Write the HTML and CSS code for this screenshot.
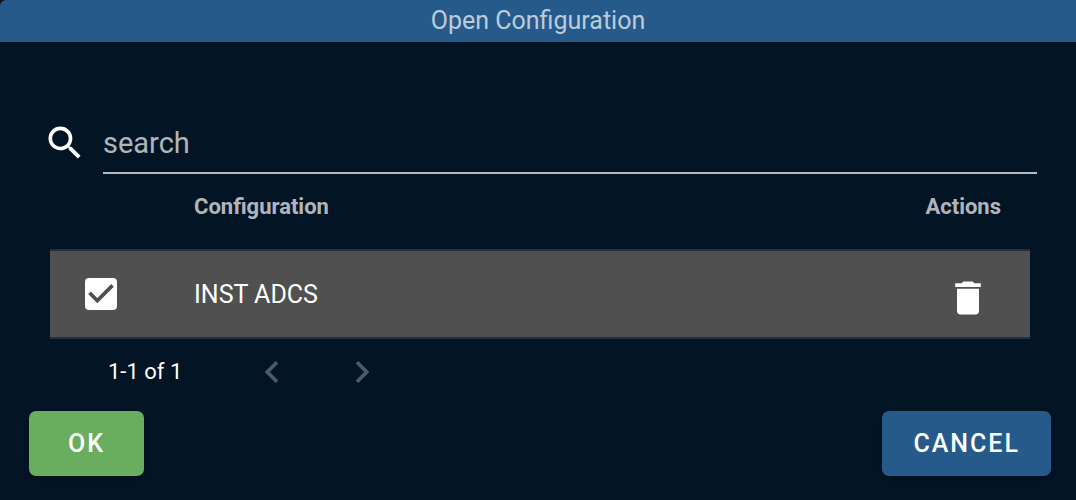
FILE: index.html
```html
<!DOCTYPE html>
<html lang="en">
<head>
<meta charset="utf-8">
<meta name="viewport" content="width=device-width, initial-scale=1">
<title>Open Configuration</title>
<link rel="stylesheet" href="styles.css">
</head>
<body>
<main class="dialog">
  <header class="dialog-bar"><h1 class="dialog-title">Open Configuration</h1></header>
  <div class="content">
    <div class="search">
      <svg class="icon" viewBox="0 0 24 24" aria-hidden="true"><path d="M9.5,3A6.5,6.5 0 0,1 16,9.5C16,11.11 15.41,12.59 14.44,13.73L14.71,14H15.5L20.5,19L19,20.5L14,15.5V14.71L13.73,14.44C12.59,15.41 11.11,16 9.5,16A6.5,6.5 0 0,1 3,9.5A6.5,6.5 0 0,1 9.5,3M9.5,5C7,5 5,7 5,9.5C5,12 7,14 9.5,14C12,14 14,12 14,9.5C14,7 12,5 9.5,5Z"/></svg>
      <input class="search-input" type="text" placeholder="search" aria-label="search">
    </div>
    <table class="table">
      <thead>
        <tr><th class="col-select"></th><th class="col-name" scope="col">Configuration</th><th class="col-actions" scope="col">Actions</th></tr>
      </thead>
      <tbody>
        <tr>
          <td class="col-select">
            <label class="check">
              <input class="check-input" type="checkbox" checked aria-label="Select INST ADCS">
              <svg class="icon check-mark" viewBox="0 0 24 24" aria-hidden="true"><path d="M10,17L5,12L6.41,10.58L10,14.17L17.59,6.58L19,8L10,17Z"/></svg>
            </label>
          </td>
          <td class="col-name">INST ADCS</td>
          <td class="col-actions">
            <button class="icon-button delete" type="button" aria-label="Delete"><svg class="icon" viewBox="0 0 24 24" aria-hidden="true"><path d="M19,4H15.5L14.5,3H9.5L8.5,4H5V6H19M6,19A2,2 0 0,0 8,21H16A2,2 0 0,0 18,19V7H6V19Z"/></svg></button>
          </td>
        </tr>
      </tbody>
    </table>
    <nav class="pager" aria-label="Pages">
      <span class="pager-range">1-1 of 1</span>
      <button class="icon-button" type="button" disabled aria-label="Previous page"><svg class="icon" viewBox="0 0 24 24" aria-hidden="true"><path d="M15.41,16.58L10.83,12L15.41,7.41L14,6L8,12L14,18L15.41,16.58Z"/></svg></button>
      <button class="icon-button" type="button" disabled aria-label="Next page"><svg class="icon" viewBox="0 0 24 24" aria-hidden="true"><path d="M8.59,16.58L13.17,12L8.59,7.41L10,6L16,12L10,18L8.59,16.58Z"/></svg></button>
    </nav>
  </div>
  <footer class="actions">
    <button class="button button-ok" type="button">OK</button>
    <button class="button button-cancel" type="button">CANCEL</button>
  </footer>
</main>
</body>
</html>
```
FILE: styles.css
```css
* { box-sizing: border-box; }

body {
  margin: 0;
  background: #121417;
  color: #fff;
  font-family: Roboto, "Liberation Sans", sans-serif;
}

.dialog {
  min-height: 100vh;
  overflow: hidden;
  border-top-left-radius: 6px;
  background: #031425;
}

.dialog-bar { background: #255a8b; text-align: center; }

.dialog-title {
  margin: 0;
  color: rgba(255, 255, 255, 0.7);
  font-size: 25px;
  font-weight: 400;
  line-height: 42px;
}

.content { padding: 72px 39px 0 43px; }

.icon {
  display: block;
  width: 44px;
  height: 44px;
  fill: currentColor;
}

.search { display: flex; align-items: flex-start; gap: 16px; padding-top: 7px; }

.search .icon { flex: none; }

.search-input {
  flex: 1;
  min-width: 0;
  height: 53px;
  padding: 0 0 8px;
  border: 0;
  border-bottom: 2px solid #b3b9be;
  border-radius: 0;
  outline: 0;
  background: transparent;
  color: #fff;
  font: 400 29px/44px Roboto, "Liberation Sans", sans-serif;
}

.search-input::placeholder { color: rgba(255, 255, 255, 0.7); opacity: 1; }

.table {
  width: calc(100% - 14px);
  margin: 0 7px;
  border-collapse: separate;
  border-spacing: 0;
  table-layout: fixed;
  text-align: left;
}

.table th {
  height: 75px;
  padding: 0 29px 11px;
  color: rgba(255, 255, 255, 0.7);
  font-size: 22px;
  font-weight: 700;
}

.table td {
  height: 90px;
  padding: 0 29px;
  border: solid #233041;
  border-width: 2px 0;
  background: #505050;
  font-size: 25px;
}

.table .col-select { width: 115px; padding-right: 0; }
.table .col-actions { width: 240px; text-align: right; }

.check { display: grid; width: 44px; height: 44px; place-items: center; }

.check-input,
.check-mark { grid-area: 1 / 1; }

.check-input {
  width: 32px;
  height: 32px;
  margin: 0;
  appearance: none;
  border: 3px solid #fff;
  border-radius: 4px;
}

.check-input:checked { background: #fff; }
.check-mark { visibility: hidden; color: #505050; pointer-events: none; }
.check-input:checked + .check-mark { visibility: visible; }

.icon-button {
  display: inline-block;
  padding: 0;
  border: 0;
  background: transparent;
  color: #fff;
  vertical-align: middle;
}

.icon-button:disabled { color: rgba(255, 255, 255, 0.3); }

.delete { margin: 8px 11px 0 0; }

.pager { display: flex; align-items: center; gap: 46px; padding: 11px 65px 0; }

.pager-range { margin-right: 22px; font-size: 22px; line-height: 40px; }

.actions { display: flex; justify-content: space-between; padding: 17px 25px 24px 29px; }

.button {
  min-width: 115px;
  height: 65px;
  padding: 0 31px;
  border: 0;
  border-radius: 7px;
  box-shadow: 0 2px 4px rgba(0, 0, 0, 0.3);
  color: #fff;
  font: 500 25px/36px Roboto, "Liberation Sans", sans-serif;
  letter-spacing: 2px;
}

.button-ok { background: #69ad5f; }
.button-cancel { background: #255a8b; }
```
